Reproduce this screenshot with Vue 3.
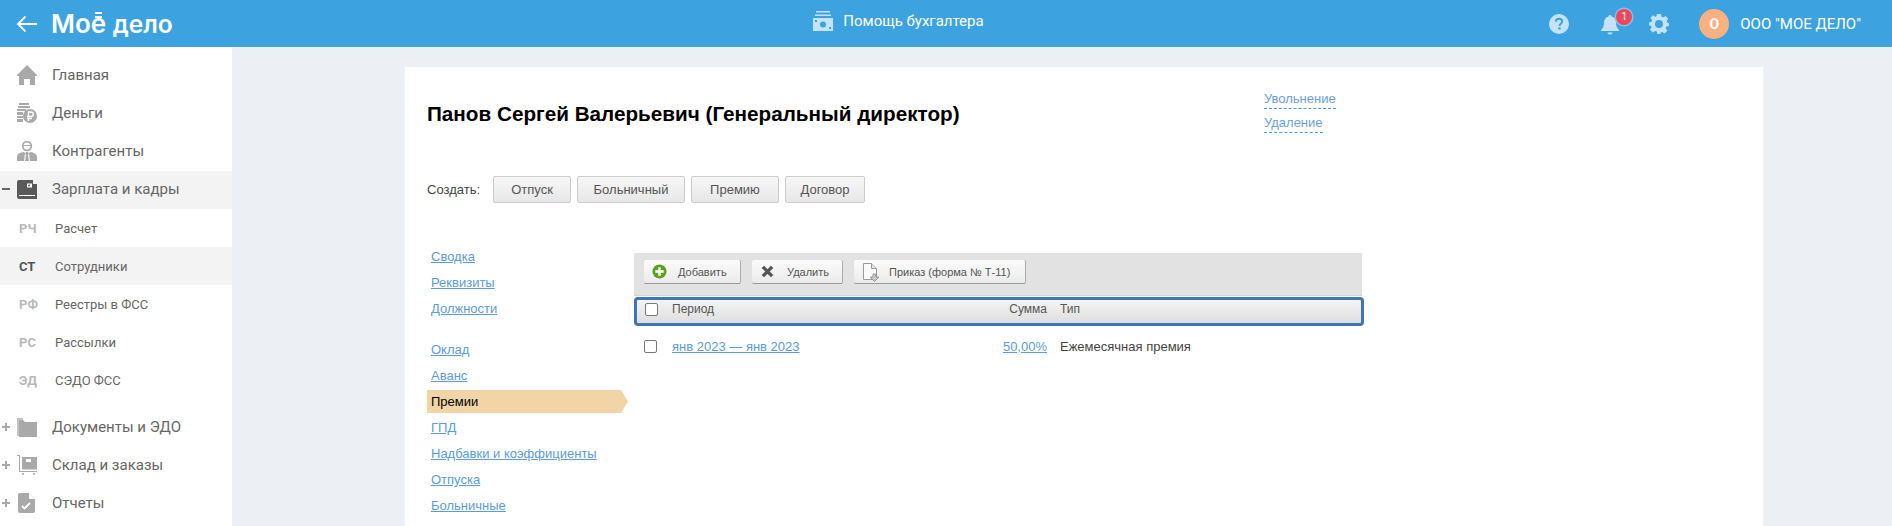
<script setup>
const topItems = [
  { label: 'Главная', icon: 'home' },
  { label: 'Деньги', icon: 'money' },
  { label: 'Контрагенты', icon: 'person' },
]
const subItems = [
  { code: 'РЧ', label: 'Расчет' },
  { code: 'СТ', label: 'Сотрудники', active: true },
  { code: 'РФ', label: 'Реестры в ФСС' },
  { code: 'РС', label: 'Рассылки' },
  { code: 'ЭД', label: 'СЭДО ФСС' },
]
const bottomItems = [
  { label: 'Документы и ЭДО', icon: 'folder' },
  { label: 'Склад и заказы', icon: 'store' },
  { label: 'Отчеты', icon: 'report' },
]
const navA = ['Сводка', 'Реквизиты', 'Должности']
const navB = [
  { label: 'Оклад' }, { label: 'Аванс' }, { label: 'Премии', active: true }, { label: 'ГПД' },
  { label: 'Надбавки и коэффициенты' }, { label: 'Отпуска' }, { label: 'Больничные' }, { label: 'Периоды нетрудоспособности' },
]
const createButtons = ['Отпуск', 'Больничный', 'Премию', 'Договор']
</script>

<template>
  <div class="page">
    <header class="topbar">
      <div class="brand">
        <svg class="back" width="22" height="18" viewBox="0 0 22 18"><path d="M21 9H2M9.500 1.500 2 9l7.500 7.500" fill="none" stroke="#fff" stroke-width="1.800"/></svg>
        <span class="logo">Мо<span class="logo-e">е</span> <span class="logo-d">дело</span></span>
      </div>
      <div class="help">
        <svg width="20" height="20" viewBox="0 0 20 20"><path d="M3 0h14v1.600H3zM2 3.500h16v1.600H2z" fill="#c5e3f7"/><path d="M0 7h20v13H0z" fill="#c5e3f7"/><circle cx="10" cy="13.500" r="3" fill="#3ca2e0"/><rect x="2" y="9" width="2" height="2" fill="#3ca2e0"/><rect x="16" y="16" width="2" height="2" fill="#3ca2e0"/></svg>
        <span>Помощь бухгалтера</span>
      </div>
      <div class="tools">
        <svg class="q" width="20" height="20" viewBox="0 0 20 20"><circle cx="10" cy="10" r="10" fill="#c5e3f7"/><path d="M6.800 7.600C7 5.700 8.300 4.800 10 4.800c1.900 0 3.200 1.100 3.200 2.700 0 2.300-2.700 2.300-2.700 4.400" fill="none" stroke="#3ca2e0" stroke-width="2"/><rect x="9.300" y="13.300" width="2.300" height="2.300" fill="#3ca2e0"/></svg>
        <div class="bell">
          <svg width="18" height="21" viewBox="0 0 18 21"><path d="M9 1c.9 0 1.400.6 1.500 1.400C13.500 3 15 5.500 15 8.500c0 4 1 5.500 3 7.500v1H0v-1c2-2 3-3.500 3-7.500 0-3 1.500-5.500 4.500-6.100C7.600 1.600 8.100 1 9 1z" fill="#c5e3f7"/><path d="M6.500 18.500h5a2.500 2 0 0 1-5 0z" fill="#c5e3f7"/></svg>
          <span class="badge">1</span>
        </div>
        <svg class="gear" width="20" height="20" viewBox="0 0 20 20"><path fill="#c5e3f7" fill-rule="evenodd" d="M8 0h4l.5 2.800 1.700.7L16.500 2l2.800 2.800-1.600 2.300.7 1.700L20 9v3l-2.600.6-.7 1.700 1.600 2.400-2.800 2.800-2.400-1.600-1.600.7L11.500 20h-3l-.6-2.400-1.700-.7-2.400 1.600L1 15.700l1.600-2.400-.7-1.700L0 11.500v-3l2.400-.6.700-1.700L1.500 3.800 4 1.300l2.300 1.500 1.200-.5zM10 6a4 4 0 1 0 0 8 4 4 0 0 0 0-8z"/></svg>
        <span class="avatar">О</span>
        <span class="org">ООО "МОЕ ДЕЛО"</span>
      </div>
    </header>

    <div class="body">
      <aside class="sidebar">
        <a v-for="it in topItems" :key="it.label" class="side-row">
          <span class="marker"></span>
          <svg v-if="it.icon === 'home'" class="ico" width="20" height="20" viewBox="0 0 20 20"><path d="M10 0 20 10v1h-2v9h-5v-6H7v6H2v-9H0v-1z" fill="#a9a9a9"/></svg>
          <svg v-else-if="it.icon === 'money'" class="ico" width="20" height="20" viewBox="0 0 20 20"><path d="M2 0h10v2H2zM1 3h12v2H1zM0 6h9v2H0zM0 9h6v3H0zM0 13h6v2H0zM0 16h6v3H0z" fill="#a9a9a9"/><circle cx="13" cy="13" r="7" fill="#a9a9a9"/><path d="M11.500 18V9h2.500a2 2 0 0 1 0 4.500H10M10 15.500h5" fill="none" stroke="#fff" stroke-width="1.400"/></svg>
          <svg v-else class="ico" width="20" height="20" viewBox="0 0 20 20"><circle cx="10" cy="5" r="4.300" fill="none" stroke="#a9a9a9" stroke-width="1.800"/><path d="M6 4h8v1H6z" fill="#a9a9a9"/><path d="M0 20v-4c0-3 3-4.500 7-5l1 1-1 8zM20 20v-4c0-3-3-4.500-7-5l-1 1 1 8zM9 11h2l1 2-1 1 1 6H8l1-6-1-1z" fill="#a9a9a9"/></svg>
          <span class="side-label">{{ it.label }}</span>
        </a>
        <a class="side-row open">
          <span class="marker minus"></span>
          <svg class="ico" width="20" height="20" viewBox="0 0 20 20"><path d="M2 1h14v4h4v15H2a2 2 0 0 1-2-2V3a2 2 0 0 1 2-2z" fill="#5a5a5a"/><path d="M2 16h16v1H2z" fill="#fff"/><rect x="10" y="4.500" width="5" height="4" fill="#fff"/><circle cx="12" cy="6.500" r="1" fill="#5a5a5a"/></svg>
          <span class="side-label">Зарплата и кадры</span>
        </a>
        <div class="subs">
          <a v-for="s in subItems" :key="s.code" class="sub-row" :class="{ active: s.active }">
            <span class="sub-code">{{ s.code }}</span>
            <span class="sub-label">{{ s.label }}</span>
          </a>
        </div>
        <a v-for="it in bottomItems" :key="it.label" class="side-row">
          <span class="marker plus"></span>
          <svg v-if="it.icon === 'folder'" class="ico" width="20" height="20" viewBox="0 0 20 20"><path d="M0 1h6v18H0z" fill="#c4c4c4"/><path d="M2 3h4l2 2h12v15H2z" fill="#a9a9a9"/></svg>
          <svg v-else-if="it.icon === 'store'" class="ico" width="20" height="20" viewBox="0 0 20 20"><path d="M0 0h3v16h17v1H2V1H0z" fill="#a9a9a9"/><path d="M5 2h15v12.500H5z" fill="#a9a9a9"/><rect x="9" y="4" width="5" height="3" fill="#fff"/><circle cx="6" cy="19" r="1" fill="#a9a9a9"/><circle cx="17" cy="19" r="1" fill="#a9a9a9"/></svg>
          <svg v-else class="ico" width="20" height="20" viewBox="0 0 20 20"><path d="M3 0h9l6 6v12a2 2 0 0 1-2 2H3a2 2 0 0 1-2-2V2a2 2 0 0 1 2-2z" fill="#a9a9a9"/><path d="M12 0v6h6z" fill="#fff"/><path d="M5 13l2.500 2.500L13 10" fill="none" stroke="#fff" stroke-width="1.800"/></svg>
          <span class="side-label">{{ it.label }}</span>
        </a>
      </aside>

      <main class="main">
        <section class="card">
          <div class="head">
            <h1 class="title">Панов Сергей Валерьевич (Генеральный директор)</h1>
            <div class="head-links">
              <a class="dash">Увольнение</a>
              <a class="dash">Удаление</a>
            </div>
          </div>
          <div class="create">
            <span class="create-label">Создать:</span>
            <button v-for="b in createButtons" :key="b" class="btn" type="button">{{ b }}</button>
          </div>
          <div class="content">
            <nav class="nav">
              <div class="nav-group">
                <div v-for="n in navA" :key="n" class="nav-item"><a>{{ n }}</a></div>
              </div>
              <div class="nav-group">
                <div v-for="n in navB" :key="n.label" class="nav-item" :class="{ current: n.active }"><a>{{ n.label }}</a></div>
              </div>
            </nav>
            <div class="panel">
              <div class="toolbar">
                <button class="tbtn add" type="button">
                  <svg width="15" height="15" viewBox="0 0 16 16"><circle cx="8" cy="8" r="7.500" fill="#5fa022"/><path d="M8 3.500v9M3.500 8h9" stroke="#fff" stroke-width="2.600"/></svg>
                  <span>Добавить</span>
                </button>
                <button class="tbtn del" type="button">
                  <svg width="13" height="13" viewBox="0 0 14 14"><path d="M2 2l10 10M12 2 2 12" stroke="#555" stroke-width="3.600"/></svg>
                  <span>Удалить</span>
                </button>
                <button class="tbtn order" type="button">
                  <svg width="20" height="20" viewBox="0 0 20 20"><path d="M2.500 1.500h8l5 5v11h-13z" fill="#fafafa" stroke="#999"/><path d="M10.500 1.500v5h5" fill="#e8e8e8" stroke="#999"/><path d="M12 12h3v3h3l-4.500 4.500L9 15h3z" fill="#c8c8c8" stroke="#888" stroke-width=".8"/></svg>
                  <span>Приказ (форма № Т-11)</span>
                </button>
              </div>
              <div class="thead">
                <span class="check"></span>
                <span class="col-period">Период</span>
                <span class="col-sum">Сумма</span>
                <span class="col-type">Тип</span>
              </div>
              <div class="trow">
                <span class="check"></span>
                <a class="col-period">янв 2023 — янв 2023</a>
                <a class="col-sum">50,00%</a>
                <span class="col-type">Ежемесячная премия</span>
              </div>
            </div>
          </div>
        </section>
      </main>
    </div>
  </div>
</template>

<style>
html, body { margin: 0; height: 526px; overflow: hidden; }
</style>

<style scoped>
.page { width: 1892px; height: 526px; overflow: hidden; background: #eceff3; display: flex; flex-direction: column; }
.topbar { height: 47px; flex: none; background: #3ca2e0; display: grid; grid-template-columns: 1fr auto 1fr; align-items: center; font-family: Roboto, sans-serif; color: #fff; }
.brand { display: flex; align-items: center; padding-left: 16px; gap: 13px; }
.back { flex: none; }
.logo { font-family: Inter, sans-serif; font-size: 26px; font-weight: 600; color: #fff; line-height: 47px; white-space: nowrap; }
.logo-e { position: relative; }
.logo-e::before { content: ""; position: absolute; left: 4px; right: 4px; top: 4px; height: 6px; border-top: 2px solid #fff; border-bottom: 2px solid #fff; box-sizing: border-box; }
.logo-d { font-size: 24.500px; }
.help { display: flex; align-items: center; gap: 10px; font-size: 15px; height: 40px; margin-bottom: 7px; margin-right: 95px; }
.tools { display: flex; align-items: center; justify-content: flex-end; padding-right: 31px; font-size: 15px; }
.bell { position: relative; width: 18px; height: 21px; margin-left: 32px; margin-right: 30px; }
.bell svg { display: block; }
.badge { position: absolute; left: 15px; top: -5px; width: 16px; height: 16px; border-radius: 50%; background: #f0465a; box-shadow: 0 0 0 1.500px #86c3ea; color: #fff; font-size: 10px; line-height: 16px; text-align: center; }
.avatar { width: 30px; height: 30px; border-radius: 50%; background: #fab182; margin-left: 30px; margin-right: 11px; text-align: center; line-height: 30px; font-weight: 700; font-size: 14px; }
.org { white-space: nowrap; }

.body { flex: 1; display: flex; min-height: 0; }
.sidebar { width: 232px; flex: none; background: #fff; padding-top: 9px; font-family: Roboto, sans-serif; box-sizing: border-box; }
.side-row { display: flex; align-items: center; height: 38px; color: #666; font-size: 15px; }
.side-row.open { background: #f3f3f4; margin-top: 1px; padding-bottom: 2px; box-sizing: border-box; }
.marker { width: 17px; flex: none; position: relative; height: 10px; }
.marker.minus::before, .marker.plus::before { content: ""; position: absolute; left: 2px; top: 4px; width: 8px; height: 2px; background: #666; }
.marker.plus::before { background: #aaa; }
.marker.plus::after { content: ""; position: absolute; left: 5px; top: 1px; width: 2px; height: 8px; background: #aaa; }
.ico { flex: none; }
.side-label { margin-left: 15px; white-space: nowrap; }
.subs { margin-bottom: 9px; }
.sub-row { display: flex; align-items: center; height: 38px; font-size: 13px; color: #666; }
.sub-row.active { background: #f3f3f4; }
.sub-code { width: 36px; margin-left: 19px; font-weight: 700; font-size: 13px; color: #b9b9b9; }
.active .sub-code { color: #555; }

.main { flex: 1; padding: 20px 129px 0 173px; min-width: 0; }
.card { background: #fff; height: 600px; padding-left: 22px; font-family: "Liberation Sans", Arial, sans-serif; font-size: 13px; color: #444; }
.head { display: flex; padding-top: 23px; height: 89px; box-sizing: border-box; }
.title { width: 837px; flex: none; margin: 0; padding-top: 12px; font-size: 20.700px; line-height: 24px; font-weight: 700; color: #000; white-space: nowrap; }
.head-links { display: flex; flex-direction: column; align-items: flex-start; gap: 5px; }
.dash { color: #6a9fdc; line-height: 18px; border-bottom: 1px dashed #4f97dd; height: 18px; }
.create { display: flex; align-items: center; height: 27px; margin-top: 20px; }
.create-label { width: 66px; flex: none; font-size: 13px; color: #444; }
.btn { height: 27px; margin-right: 6px; padding: 0; border: 1px solid #ccc; border-radius: 2px; background: linear-gradient(#f7f7f7, #e7e7e7); font: 13px "Liberation Sans", Arial, sans-serif; color: #555; box-sizing: border-box; }
.btn:nth-of-type(1) { width: 78px; }
.btn:nth-of-type(2) { width: 108px; }
.btn:nth-of-type(3) { width: 88px; }
.btn:nth-of-type(4) { width: 80px; }

.content { display: flex; margin-top: 40px; }
.nav { width: 207px; flex: none; padding-top: 1px; }
.nav-group { margin-bottom: 15px; }
.nav-item { height: 26px; line-height: 26px; padding-left: 4px; color: #5b9bd8; text-decoration: underline; white-space: nowrap; }
.nav-item.current { width: 201px; height: 23px; line-height: 23px; margin: 1px 0 2px; box-sizing: border-box; background: #f1d5a6; clip-path: polygon(0 0, 194px 0, 100% 50%, 194px 100%, 0 100%); color: #000; text-decoration: none; }
.panel { width: 730px; flex: none; margin-top: 10px; }
.toolbar { width: 728px; height: 43px; background: #e2e2e2; display: flex; align-items: flex-start; padding: 7px 0 0 10px; box-sizing: border-box; gap: 11px; border-bottom: 1px solid #d3d3d3; }
.tbtn { height: 24px; display: flex; align-items: center; padding: 0; border: 0; border-right: 1px solid #aaa; border-bottom: 1px solid #999; border-radius: 2px; background: linear-gradient(#fbfbfb, #ebebeb); font: 11px "Liberation Sans", Arial, sans-serif; color: #555; box-sizing: border-box; }
.tbtn.add { width: 97px; padding-left: 8px; gap: 11px; }
.tbtn.del { width: 91px; padding-left: 9px; gap: 13px; }
.tbtn.order { width: 172px; padding-left: 7px; gap: 8px; }
.thead { width: 730px; height: 29px; margin-top: 1px; box-sizing: border-box; border: 3px solid #3c78b8; border-radius: 4px; background: linear-gradient(#f4f4f4, #dedede); display: flex; align-items: center; font-size: 12px; color: #555; padding-left: 8px; padding-bottom: 5px; }
.trow { display: flex; align-items: center; width: 730px; height: 20px; margin-top: 10px; padding-left: 10px; box-sizing: border-box; font-size: 13px; color: #444; }
.check { width: 13px; height: 13px; flex: none; border: 1px solid #777; border-radius: 2px; box-sizing: border-box; background: #fff; }
.col-period { margin-left: 14px; flex: 1; }
.trow .col-period { margin-left: 15px; flex: 1; }
.col-sum { flex: none; }
.col-type { margin-left: 13px; flex: none; }
.thead .col-type { width: 301px; }
.trow .col-type { width: 304px; }
.trow a { color: #5b9bd8; text-decoration: underline; }
</style>
